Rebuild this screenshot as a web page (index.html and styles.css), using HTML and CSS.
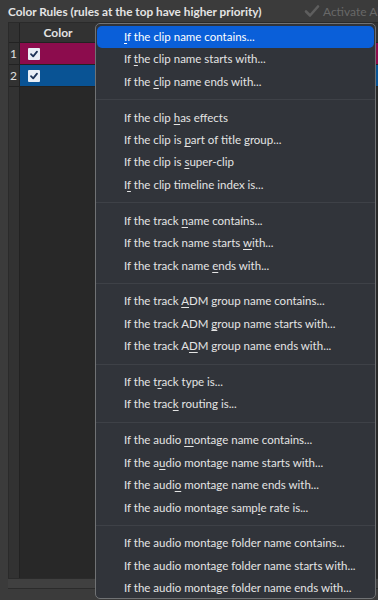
FILE: index.html
```html
<!DOCTYPE html>
<html>
<head>
<meta charset="utf-8">
<link rel="stylesheet" href="styles.css">
</head>
<body>
<div class="window">
  <div class="topbar">
    <span class="title">Color Rules (rules at the top have higher priority)</span>
    <span class="activate">
      <svg class="tick" width="16" height="14" viewBox="0 0 16 14"><path d="M2 7.5 L6 11.5 L14 2.5" fill="none" stroke="#5e5e5e" stroke-width="2.6" stroke-linecap="round" stroke-linejoin="round"/></svg>
      Activate All
    </span>
  </div>
  <div class="panel">
    <div class="table">
      <div class="row head"><div class="num"></div><div class="cell hcell">Color</div></div>
      <div class="row r1"><div class="num">1</div><div class="cell magenta"><span class="check"><svg width="10" height="10" viewBox="0 0 10 10"><path d="M2 5.2 L4.2 7.4 L8 2.6" fill="none" stroke="#1c3358" stroke-width="1.8" stroke-linecap="round" stroke-linejoin="round"/></svg></span></div></div>
      <div class="row r2"><div class="num">2</div><div class="cell blue"><span class="check"><svg width="10" height="10" viewBox="0 0 10 10"><path d="M2 5.2 L4.2 7.4 L8 2.6" fill="none" stroke="#1c3358" stroke-width="1.8" stroke-linecap="round" stroke-linejoin="round"/></svg></span></div></div>
      <div class="body"><div class="num"></div><div class="cell"></div></div>
    </div>
    <div class="scrollbars">
      <div class="hbar"></div>
    </div>
  </div>

  <div class="menu">
    <div class="item active"><u>I</u>f the clip name contains...</div>
    <div class="item">If <u>t</u>he clip name starts with...</div>
    <div class="item">If the <u>c</u>lip name ends with...</div>
    <div class="sep"></div>
    <div class="item">If the clip <u>h</u>as effects</div>
    <div class="item">If the clip is <u>p</u>art of title group...</div>
    <div class="item">If the clip is <u>s</u>uper-clip</div>
    <div class="item">I<u>f</u> the clip timeline index is...</div>
    <div class="sep"></div>
    <div class="item">If the track <u>n</u>ame contains...</div>
    <div class="item">If the track name starts <u>w</u>ith...</div>
    <div class="item">If the track name <u>e</u>nds with...</div>
    <div class="sep"></div>
    <div class="item">If the track <u>A</u>DM group name contains...</div>
    <div class="item">If the track ADM <u>g</u>roup name starts with...</div>
    <div class="item">If the track A<u>D</u>M group name ends with...</div>
    <div class="sep"></div>
    <div class="item">If the t<u>r</u>ack type is...</div>
    <div class="item">If the trac<u>k</u> routing is...</div>
    <div class="sep"></div>
    <div class="item">If the audio <u>m</u>ontage name contains...</div>
    <div class="item">If the a<u>u</u>dio montage name starts with...</div>
    <div class="item">If the audi<u>o</u> montage name ends with...</div>
    <div class="item">If the audio montage samp<u>l</u>e rate is...</div>
    <div class="sep"></div>
    <div class="item">If the audio montage folder name contains...</div>
    <div class="item">If the audio montage folder name starts with...</div>
    <div class="item">If the audio montage folder name ends with...</div>
  </div>
</div>
</body>
</html>
```

FILE: styles.css
```css
html, body {
  margin: 0;
  padding: 0;
  background: #3b3b3b;
}
.window {
  position: relative;
  width: 378px;
  height: 600px;
  overflow: hidden;
  font-family: Lato, "Open Sans", sans-serif;
  color: #e2e2e2;
  display: flex;
  flex-direction: column;
}
.topbar {
  height: 22px;
  display: flex;
  align-items: center;
  padding: 0 0 0 8px;
  white-space: nowrap;
}
.title {
  font-weight: 700;
  font-size: 11.8px;
  color: #e4e4e4;
}
.activate {
  display: flex;
  align-items: center;
  gap: 3px;
  color: #686868;
  font-size: 12px;
  margin-left: auto;
  margin-right: -5px;
}
.panel {
  flex: 1;
  display: flex;
  flex-direction: column;
  padding: 0 0 0 8px;
}
.table {
  flex: 1;
  display: flex;
  flex-direction: column;
  border-top: 1px solid #2a2a2a;
  border-left: 1px solid #2a2a2a;
  background: #282828;
}
.row {
  display: flex;
  height: 21px;
  border-bottom: 1px solid #222;
}
.row.head {
  height: 19px;
  background: #323232;
  border-bottom: 1px solid #222;
}
.num {
  width: 9px;
  flex: none;
  background: #323232;
  border-right: 1px solid #222;
  font-size: 12px;
  line-height: 21px;
  padding-left: 1px;
  color: #e0e0e0;
}
.cell {
  flex: 1;
}
.hcell {
  text-align: center;
  font-size: 12px;
  font-weight: 700;
  line-height: 19px;
  width: 76px;
  flex: none;
}
.magenta { background: #8c0c4d; }
.blue { background: #095394; }
.check {
  display: inline-flex;
  align-items: center;
  justify-content: center;
  width: 12px;
  height: 12px;
  margin: 4px 0 0 8px;
  background: #e8eef6;
  border-radius: 1px;
}
.body {
  flex: 1;
  display: flex;
}
.scrollbars {
  height: 22px;
  display: flex;
  flex-direction: column;
}
.hbar {
  height: 9px;
  background: #404040;
  border-top: 1px solid #2b2b2b;
  border-bottom: 1px solid #2b2b2b;
}

.menu {
  position: absolute;
  left: 95px;
  top: 23px;
  width: 277px;
  height: 570px;
  background: #31343a;
  border: 1px solid #707274;
  border-radius: 5px;
  padding: 2px 1px;
  box-sizing: content-box;
}
.item {
  height: 22.4px;
  line-height: 22.4px;
  padding-left: 27px;
  font-size: 11.5px;
  color: #e4e4e4;
  white-space: nowrap;
  border-radius: 5px;
}
.item.active {
  background: #0a5fd9;
  color: #fff;
}
.item u {
  text-decoration-thickness: 1px;
  text-underline-offset: 2px;
}
.sep {
  height: 1px;
  background: #3e4147;
  margin: 6px -1px 6.5px -1px;
}
```
